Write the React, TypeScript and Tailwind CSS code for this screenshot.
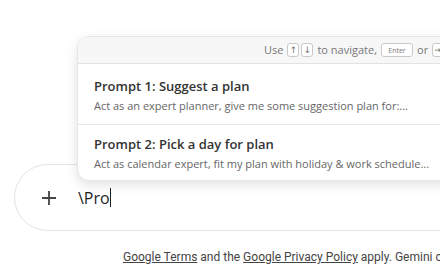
import React from 'react';

const Key: React.FC<{ children: React.ReactNode; wide?: boolean }> = ({ children, wide }) => (
  <span
    className={`inline-flex h-[14px] items-center justify-center rounded-[3px] border border-[#c9c9c9] bg-white leading-none text-[#777] ${
      wide ? 'w-[32px] text-[7px]' : 'w-[12px] text-[9px]'
    }`}
    style={wide ? undefined : { fontFamily: '"DejaVu Sans", sans-serif' }}
  >
    {children}
  </span>
);

const prompts = [
  { title: 'Prompt 1: Suggest a plan', desc: 'Act as an expert planner, give me some suggestion plan for:...' },
  { title: 'Prompt 2: Pick a day for plan', desc: 'Act as calendar expert, fit my plan with holiday & work schedule...' },
];

export default function App() {
  return (
    <div className="relative h-[280px] w-[440px] overflow-hidden bg-white" style={{ fontFamily: '"Open Sans", "Noto Sans", sans-serif' }}>
      <div className="pt-[164px] pl-[14px]">
        <div className="flex h-[67px] w-[600px] items-center rounded-[34px] border border-[#e3e3e3] bg-white">
          <svg className="ml-[26px]" width="16" height="16" viewBox="0 0 16 16" fill="none" stroke="#444" strokeWidth="1.8">
            <path d="M8 1v14M1 8h14" />
          </svg>
          <span className="ml-[21px] text-[16px] text-[#1f1f1f]">\Pro</span>
          <span className="h-[19px] w-px bg-[#1f1f1f]" />
        </div>
        <p className="mt-[17px] whitespace-nowrap pl-[109px] text-[12px] text-[#444]" style={{ fontFamily: 'Roboto, sans-serif' }}>
          <span className="underline">Google Terms</span> and the <span className="underline">Google Privacy Policy</span> apply. Gemini can make mistakes.
        </p>
      </div>

      <div className="absolute left-[77px] top-[36px] w-[480px] overflow-hidden rounded-xl border border-[#e6e6e6] bg-white shadow-[0_4px_12px_rgba(0,0,0,0.12)]">
        <div className="flex h-[27px] items-center gap-[4px] whitespace-nowrap border-b border-[#e2e2e2] bg-[#f7f7f7] pl-[186px] text-[11px] text-[#777]">
          <span>Use</span>
          <span className="flex gap-[2px]">
            <Key>↑</Key>
            <Key>↓</Key>
          </span>
          <span>to navigate,</span>
          <Key wide>Enter</Key>
          <span>or</span>
          <Key>⇥</Key>
          <span>to select</span>
        </div>
        {prompts.map((p, i) => (
          <div key={i} className={`px-4 ${i === 0 ? 'pt-[13px] pb-[11px] border-b border-[#e6e6e6]' : 'pt-[10px] pb-[9px]'}`}>
            <div className="text-[13px] font-semibold leading-[18px] text-[#333]">{p.title}</div>
            <div className="mt-[3px] text-[11px] leading-[15px] text-[#666]">{p.desc}</div>
          </div>
        ))}
      </div>
    </div>
  );
}
